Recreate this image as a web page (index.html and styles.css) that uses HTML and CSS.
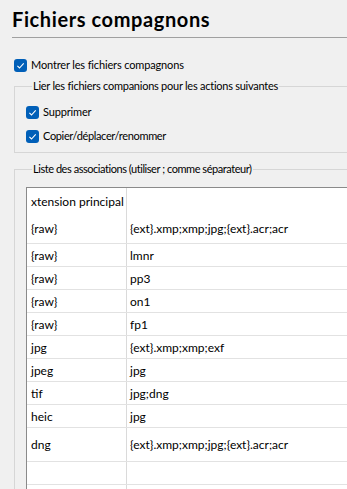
FILE: index.html
```html
<!DOCTYPE html>
<html lang="fr">
<head>
<meta charset="utf-8">
<title>Fichiers compagnons</title>
<link rel="stylesheet" href="styles.css">
</head>
<body>
<div class="page">
  <h1 class="title">Fichiers compagnons</h1>
  <label class="check top"><span class="box"><svg width="13" height="13" viewBox="0 0 13 13"><rect x="0" y="0" width="13" height="13" rx="3" fill="#005fb8"/><path d="M3.4 6.9 L5.5 9 L9.7 4.4" fill="none" stroke="#fff" stroke-width="1.1"/></svg></span>Montrer les fichiers compagnons</label>
  <fieldset class="group g1">
    <legend>Lier les fichiers companions pour les actions suivantes</legend>
    <label class="check"><span class="box"><svg width="13" height="13" viewBox="0 0 13 13"><rect x="0" y="0" width="13" height="13" rx="3" fill="#005fb8"/><path d="M3.4 6.9 L5.5 9 L9.7 4.4" fill="none" stroke="#fff" stroke-width="1.1"/></svg></span>Supprimer</label>
    <label class="check tight"><span class="box"><svg width="13" height="13" viewBox="0 0 13 13"><rect x="0" y="0" width="13" height="13" rx="3" fill="#005fb8"/><path d="M3.4 6.9 L5.5 9 L9.7 4.4" fill="none" stroke="#fff" stroke-width="1.1"/></svg></span>Copier/déplacer/renommer</label>
  </fieldset>
  <fieldset class="group g2">
    <legend>Liste des associations (utiliser ; comme séparateur)</legend>
    <div class="grid">
      <div class="row head"><div class="c1">xtension principal</div><div class="c2"></div></div>
      <div class="row tall1"><div class="c1">{raw}</div><div class="c2">{ext}.xmp;xmp;jpg;{ext}.acr;acr</div></div>
      <div class="row"><div class="c1">{raw}</div><div class="c2">lmnr</div></div>
      <div class="row"><div class="c1">{raw}</div><div class="c2">pp3</div></div>
      <div class="row"><div class="c1">{raw}</div><div class="c2">on1</div></div>
      <div class="row"><div class="c1">{raw}</div><div class="c2">fp1</div></div>
      <div class="row"><div class="c1">jpg</div><div class="c2">{ext}.xmp;xmp;exf</div></div>
      <div class="row"><div class="c1">jpeg</div><div class="c2">jpg</div></div>
      <div class="row"><div class="c1">tif</div><div class="c2">jpg;dng</div></div>
      <div class="row"><div class="c1">heic</div><div class="c2">jpg</div></div>
      <div class="row tall2"><div class="c1">dng</div><div class="c2">{ext}.xmp;xmp;jpg;{ext}.acr;acr</div></div>
      <div class="row"><div class="c1"></div><div class="c2"></div></div>
      <div class="row"><div class="c1"></div><div class="c2"></div></div>
    </div>
  </fieldset>
</div>
</body>
</html>
```
FILE: styles.css
```css
html, body {
  margin: 0;
  padding: 0;
  overflow: hidden;
  background: #f0f0f0;
}
body {
  font-family: Lato, "Noto Sans", sans-serif;
  font-size: 11px;
  letter-spacing: -0.15px;
  color: #000;
}
.page {
  width: 347px;
  height: 489px;
  overflow: hidden;
}
.title {
  margin: 0 -20px 0 12px;
  padding: 6px 0 4px 0;
  font-size: 20px;
  letter-spacing: 0.6px;
  line-height: 27px;
  font-weight: 700;
  border-bottom: 1px solid #a0a0a0;
}
.check {
  display: flex;
  align-items: center;
  gap: 4px;
  height: 16px;
  line-height: 16px;
  white-space: nowrap;
}
.check.tight { letter-spacing: -0.35px; }
.check .box {
  display: block;
  width: 13px;
  height: 13px;
}
.check .box svg { display: block; }
.check.top {
  margin: 19px 0 0 14px;
}
.group {
  margin: 0 -40px 0 14px;
  min-width: 0;
  border: 1px solid #d6d6d6;
  padding: 0;
}
.group legend {
  margin-left: 6px;
  padding: 0 1px;
  line-height: 16px;
  white-space: nowrap;
}
.g1 {
  margin-top: 5px;
  padding: 10px 0 8px 11px;
  display: flex;
  flex-direction: column;
  gap: 8px;
}
.g1 legend { letter-spacing: -0.25px; }
.g1 .check { margin: 0; }
.g2 {
  margin-top: 8px;
  padding: 10px 0 0 11px;
  height: 400px;
}
.g2 legend { letter-spacing: -0.45px; }
.grid {
  background: #fff;
  border-left: 1px solid #8a8a8a;
  border-top: 1px solid #8a8a8a;
  font-size: 12px;
  letter-spacing: 0;
}
.row {
  display: flex;
  height: 23px;
  border-bottom: 1px solid #e2e2e2;
  box-sizing: border-box;
  white-space: nowrap;
}
.row.head {
  height: 26px;
  border-bottom: none;
}
.row.tall1 { height: 30px; }
.row.tall2 { height: 34px; }
.c1 {
  box-sizing: border-box;
  width: 100px;
  flex: none;
  border-right: 1px solid #dadada;
  padding-left: 4px;
  display: flex;
  align-items: center;
  overflow: hidden;
}
.c2 {
  flex: 1;
  padding-left: 3px;
  display: flex;
  align-items: center;
}
```
